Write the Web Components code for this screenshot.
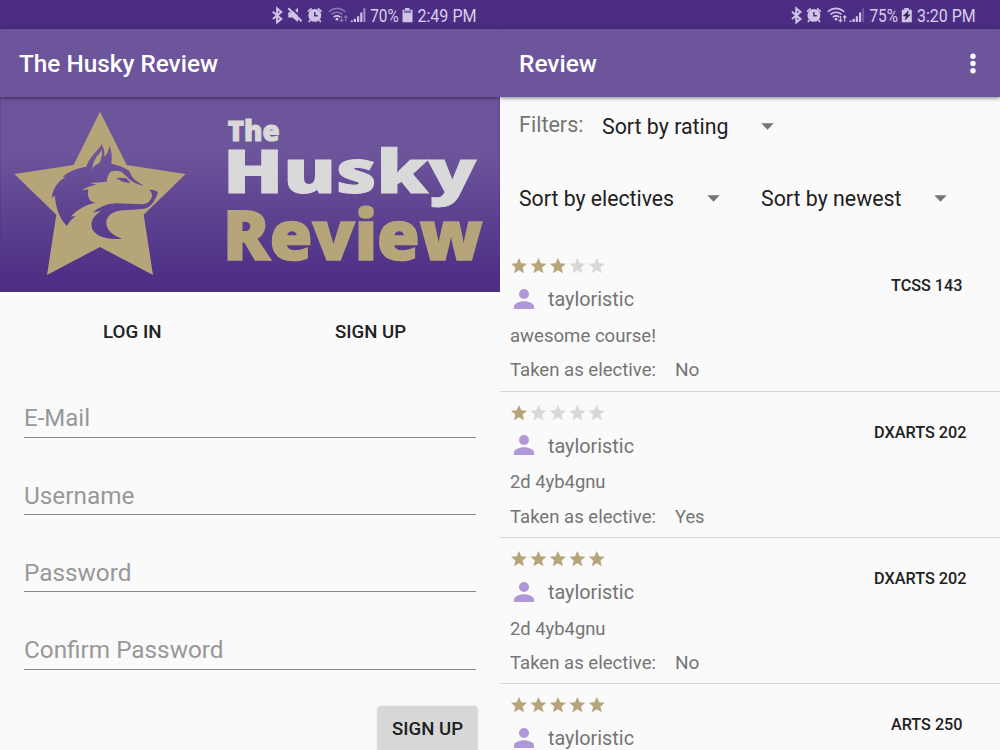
<!DOCTYPE html>
<html lang="en">
<head>
<meta charset="utf-8">
<title>The Husky Review</title>
<style>
html,body{margin:0;height:100%;overflow:hidden}
body{display:flex;background:#fafafa;font-family:Roboto,"Liberation Sans",sans-serif;color:#212121}
</style>
</head>
<body>
<phone-screen>
  <status-bar slot="status" kind="login"></status-bar>
  <app-bar slot="bar"><fit-text w="199">The Husky Review</fit-text></app-bar>
  <husky-logo></husky-logo>
  <login-tabs></login-tabs>
  <sign-form></sign-form>
</phone-screen>
<phone-screen>
  <status-bar slot="status" kind="review"></status-bar>
  <app-bar slot="bar" menu><fit-text w="78">Review</fit-text></app-bar>
  <filter-panel></filter-panel>
  <review-item rating="3" course="TCSS 143" cw="71.5" mr="37.5" text="awesome course!" tw="146" elective="No" ew="24.5"></review-item>
  <review-item rating="1" course="DXARTS 202" cw="92.5" mr="34" text="2d 4yb4gnu" tw="95.5" elective="Yes" ew="29.5"></review-item>
  <review-item rating="5" course="DXARTS 202" cw="92.5" mr="34" text="2d 4yb4gnu" tw="95.5" elective="No" ew="24.5"></review-item>
  <review-item rating="5" course="ARTS 250" cw="71.5" mr="37.5" text="" tw="0" elective="" ew="0"></review-item>
</phone-screen>

<script>
const define = (name, render, after) => customElements.define(name, class extends HTMLElement {
  connectedCallback() {
    if (this.shadowRoot) return;
    this.attachShadow({mode: 'open'}).innerHTML = render(this);
    if (after) after(this);
  }
});

define('phone-screen', () => `<style>
  :host{display:flex;flex-direction:column;width:500px;height:750px;overflow:hidden;flex:none}
  main{flex:1;min-height:0;overflow:hidden}
</style><slot name="status"></slot><slot name="bar"></slot><main><slot></slot></main>`);

const bluetooth = '<path d="M1.5 4.8 10 12 5.8 15.4V1.4l4.2 3.5L1.5 12" fill="none" stroke="#cfc4e6" stroke-width="2"/>';
const alarm = x => `<g transform="translate(${x} 0)"><circle cx="8" cy="8.4" r="6.4"/><path d="M1.2 4.6 4.8 1.3M11.2 1.3l3.6 3.3M3.5 13 2 15M12.5 13l1.5 2" stroke="#cfc4e6" stroke-width="1.7"/><path d="M8 5v3.8h3" fill="none" stroke="#4b2e83" stroke-width="1.5"/></g>`;
const wifi = (x, dim) => `<g transform="translate(${x} 0)" fill="none" stroke="#cfc4e6" stroke-width="1.6"><path d="M.8 4.6Q9-1.8 17.2 4.6" opacity="${dim}"/><path d="M3.4 7.4Q9 3 14.6 7.4" opacity="${dim}"/><path d="M5.7 10.2Q9 7.6 12.3 10.2"/><circle cx="9" cy="12.2" r="1.4" fill="#cfc4e6" stroke="none"/><path d="M13.5 9v5.5M11.8 12.8l1.7 1.8 1.7-1.8M17.7 14.5V9M16 10.7 17.7 8.9l1.7 1.8" stroke-width="1.2" opacity="${dim}"/></g>`;
const signal = (x, last) => `<g transform="translate(${x} 0)"><path d="M0 15v-1.5h2V15zM3 15v-3.2h2.2V15zM6.2 15V9.2h2.2V15zM9.4 15V5.5h2.2V15z"/><path d="M12.6 15V1.3h1.9V15z" opacity="${last}"/></g>`;
const lbl = (x, w, t) => `<text x="${x}" y="15" textLength="${w}" lengthAdjust="spacingAndGlyphs">${t}</text>`;

define('status-bar', el => {
  const login = el.getAttribute('kind') === 'login';
  const body = login
    ? `<g transform="translate(.3 0)">${bluetooth}</g>
       <path d="M17.3 5.3h4L27 1v14l-5.7-4.5h-4z"/><path d="M18 -1.2 32.5 12.8" stroke="#4b2e83" stroke-width="2"/><path d="M17.3 1.2 30.6 14.2" stroke="#cfc4e6" stroke-width="2"/>
       ${alarm(35.8)}${wifi(57, .45)}<g transform="translate(79.8 0)">${signal(0, .7)}</g>
       ${lbl(99.2, 28.5, '70%')}<path d="M134 .9h4.5v1.8h3v12.6h-10V2.7h2.5z"/><path d="M132.8 3.6h7.4v2.2h-7.4z" fill="#75629f"/>
       ${lbl(146.4, 59.2, '2:49 PM')}`
    : `<g transform="translate(-.5 0)">${bluetooth}</g>${alarm(14.9)}${wifi(36, 1)}${signal(58.6, .3)}
       ${lbl(78.4, 28.5, '75%')}<path d="M113.3.9h4.5v1.8h3v12.6h-10V2.7h2.5z"/><path d="m117.3 4-5 5h3.1l-1.2 4 4.9-5.3h-2.8z" fill="#312053" stroke="#312053" stroke-width=".6"/>
       ${lbl(126, 58.6, '3:20 PM')}`;
  return `<style>
    :host{display:flex;justify-content:flex-end;height:29px;flex:none;background:#4b2e83;box-sizing:border-box;padding:7px ${login ? 22 : 23}px 0 0}
    svg{display:block;overflow:visible}
    text{font:18px Roboto,sans-serif;fill:#d8cfeb}
  </style><svg width="${login ? 207 : 186}" height="18" fill="#cfc4e6">${body}</svg>`;
});

define('app-bar', el => `<style>
  :host{display:flex;align-items:center;height:68px;flex:none;background:#6d559b;color:#fff;font-size:24px;font-weight:500;padding:2px 24px 0 19.3px;box-sizing:border-box;justify-content:space-between;box-shadow:0 1px 4px rgba(0,0,0,.5);position:relative;z-index:1}
  svg{display:block;margin-top:-1px}
</style><slot></slot>${el.hasAttribute('menu') ? '<svg width="6" height="22" fill="#fff"><circle cx="3" cy="3.3" r="2.7"/><circle cx="3" cy="10.5" r="2.7"/><circle cx="3" cy="17.8" r="2.7"/></svg>' : ''}`);

define('husky-logo', () => `<style>
  :host{display:block;height:195px}
  svg{display:block}
  text{font-family:"Open Sans","Noto Sans",sans-serif;font-weight:800;stroke-linejoin:miter}
</style><svg width="500" height="195" viewBox="0 3 1500 585">
  <defs><linearGradient id="g" gradientUnits="userSpaceOnUse" x1="0" y1="3" x2="0" y2="588">
    <stop offset="0" stop-color="#6d559b"/><stop offset=".28" stop-color="#6d559b"/><stop offset=".92" stop-color="#4e3086"/><stop offset="1" stop-color="#4b2e83"/></linearGradient></defs>
  <rect y="3" width="1500" height="585" fill="url(#g)"/>
  <path d="M1 3v585M1499 3v585" stroke="#4b2e83" stroke-width="3" opacity=".35"/>
  <path fill="#b7a57a" d="M300 47 380 207 557 234 431 356 459 537 300 453 141 537 169 356 43 234 221 207z"/>
  <g fill="url(#g)">
    <path d="M258 212Q270 184 290 164Q303 151 305 143Q314 158 313 182Q323 174 329 150Q338 171 334 203Q361 207 388 224Q394 243 410 256L432 270Q404 264 388 250Q379 240 365 228Q345 221 331 228Q322 238 320 257Q294 260 270 260Q282 266 294 265Q266 270 247 282Q256 282 265 280Q260 304 272 314Q279 320 288 320Q244 327 212 362Q220 361 227 360Q211 372 200 390Q169 357 164 299Q159 301 155 307Q158 266 196 242L187 243Q214 218 258 212z"/>
    <path d="M348 246Q366 244 379 247L391 260Q370 262 360 253z"/>
    <path d="M448 282Q463 278 474 289Q471 301 464 311Q454 333 433 338Q400 342 365 343Q318 351 319 381Q321 413 366 428Q326 433 295 418Q266 400 277 371Q284 356 305 344L278 350Q307 324 348 322L430 325Q451 321 456 301Q457 290 448 282z"/>
  </g>
  <path fill="#b7a57a" d="M305 159Q309 181 298 201Q284 206 276 221Q280 190 297 174Q304 167 305 159z"/>
  <g fill="#d9d9d9" stroke="#d9d9d9" stroke-width="3">
    <text x="683" y="134" font-size="82" textLength="156" lengthAdjust="spacingAndGlyphs">The</text>
    <text x="669" y="292" font-size="180" textLength="760" lengthAdjust="spacingAndGlyphs">Husky</text>
  </g>
  <text x="669" y="491" font-size="208" textLength="779" lengthAdjust="spacingAndGlyphs" fill="#b7a57a" stroke="#b7a57a" stroke-width="5">Review</text>
</svg>`);

define('login-tabs', () => `<style>
  :host{display:grid;grid-template-columns:238px 238px;padding:0 13.5px;height:80px;align-items:center;justify-items:center;font-size:18.3px;font-weight:500}
</style><fit-text w="58.5">LOG IN</fit-text><fit-text w="71">SIGN UP</fit-text>`);

define('sign-form', () => `<style>
  :host{display:flex;flex-direction:column;padding:0 24px}
  .f{height:77.35px;box-sizing:border-box;border-bottom:1.4px solid #858585;display:flex;align-items:flex-end;padding-bottom:5.5px;color:#989898;font-size:24.6px}
  .f:first-of-type{height:65.5px}
  button{align-self:flex-end;margin:36.5px -.5px 0 0;width:99px;height:47px;border:0;border-radius:2px;background:#d6d7d7;font:500 18.3px Roboto,sans-serif;color:#212121;padding:0;box-shadow:0 1px 3px rgba(0,0,0,.3)}
  button fit-text{margin:0 auto;text-align:left}
</style><div class="f"><fit-text w="66">E-Mail</fit-text></div><div class="f"><fit-text w="110.5">Username</fit-text></div><div class="f"><fit-text w="107.5">Password</fit-text></div><div class="f"><fit-text w="199.5">Confirm Password</fit-text></div><button><fit-text w="71">SIGN UP</fit-text></button>`);

define('drop-down', () => `<style>
  :host{display:flex;align-items:center;font-size:22.5px;color:#212121}
  svg{display:block;margin-left:32.5px}
</style><slot></slot><svg width="13" height="7"><path d="M.3.3h12.4L6.5 6.7z" fill="#757575"/></svg>`);

define('filter-panel', () => `<style>
  :host{display:flex;flex-direction:column;height:148.4px;padding:0 0 0 19px}
  div{display:flex;align-items:center}
  .a{height:58px;gap:18.5px;color:#757575}
  .a>fit-text{font-size:21.8px;margin-top:-2px}
  .b{height:87px;gap:41px}
</style><div class="a"><fit-text w="64.5">Filters:</fit-text><drop-down><fit-text w="126.5">Sort by rating</fit-text></drop-down></div>
<div class="b"><drop-down><fit-text w="155">Sort by electives</fit-text></drop-down><drop-down><fit-text w="140.5">Sort by newest</fit-text></drop-down></div>`);

define('star-rating', el => `<style>:host{display:block}svg{display:block}</style><svg width="96" height="16">${
  [0,1,2,3,4].map(i => `<path transform="translate(${i * 19.45} 0)" fill="${i < +el.getAttribute('value') ? '#b7a57a' : '#d8d8d8'}" d="M8 0 10.3 5.3 16 5.8 11.6 9.6 13 15.3 8 12.3 3 15.3 4.4 9.6 0 5.8 5.7 5.3z"/>`).join('')
}</svg>`);

define('review-item', el => {
  const a = n => el.getAttribute(n);
  return `<style>
    :host{display:flex;justify-content:space-between;height:146.35px;box-sizing:border-box;border-bottom:1.4px solid #d8d8d8;color:#757575;font-size:18.7px}
    .l{display:flex;flex-direction:column;padding:12.8px 0 0 9.7px}
    star-rating{margin-left:1.7px}
    .u{display:flex;align-items:center;height:20px;margin:15.4px 0 0 4.3px;gap:14.3px;font-size:20.4px}
    .u svg{margin-top:-1px}
    .t{height:19px;margin-top:17.3px}
    .e{display:flex;gap:19px;margin-top:15.6px}
    .c{color:#212121;font-size:16.4px;font-weight:500;margin:33px ${a('mr')}px 0 0}
  </style><div class="l"><star-rating value="${a('rating')}"></star-rating>
  <div class="u"><svg width="20" height="20" fill="#b098d8"><circle cx="10" cy="5" r="5"/><path d="M0 20v-2.6C0 14 6.8 12.3 10 12.3S20 14 20 17.4V20z"/></svg><fit-text w="86">tayloristic</fit-text></div>
  ${a('text') ? `<div class="t"><fit-text w="${a('tw')}">${a('text')}</fit-text></div>
  <div class="e"><fit-text w="146">Taken as elective:</fit-text><fit-text w="${a('ew')}">${a('elective')}</fit-text></div>` : ''}</div>
  <fit-text class="c" w="${a('cw')}">${a('course')}</fit-text>`;
});

/* Text condensed or widened to occupy the width given in "w". Defined last, so that
   the elements around it have already set the font it is measured in. */
define('fit-text', () => `<style>
  :host{display:block;white-space:nowrap;line-height:1}
  span{display:inline-block;transform-origin:0 0}
</style><span><slot></slot></span>`, el => {
  const w = +el.getAttribute('w');
  const span = el.shadowRoot.querySelector('span');
  const natural = span.getBoundingClientRect().width;
  if (!w || !natural) return;
  span.style.transform = `scaleX(${w / natural})`;
  el.style.width = w + 'px';
});
</script>
</body>
</html>
